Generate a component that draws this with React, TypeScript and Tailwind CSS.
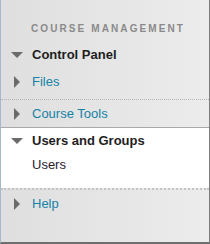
import { ReactNode } from 'react'

function Caret({ open }: { open?: boolean }) {
  return open ? (
    <svg width="12" height="6" viewBox="0 0 12 6" className="shrink-0">
      <polygon points="0,0 12,0 6,6" fill="#6b6b6b" />
    </svg>
  ) : (
    <svg width="6" height="12" viewBox="0 0 6 12" className="shrink-0">
      <polygon points="0,0 6,6 0,12" fill="#6b6b6b" />
    </svg>
  )
}

function Row({ open, bold, h, children }: { open?: boolean; bold?: boolean; h: string; children: ReactNode }) {
  return (
    <div className={`flex items-center ${h}`}>
      <div className="flex w-[31px] justify-center pl-[1px]">
        <Caret open={open} />
      </div>
      <span
        className={
          bold
            ? 'text-[13px] font-bold text-[#1e1e1e]'
            : 'text-[13px] text-[#1582a6]'
        }
      >
        {children}
      </span>
    </div>
  )
}

export default function App() {
  return (
    <div
      className="flex h-[244px] w-[210px] flex-col border-b-2 border-l border-r border-b-[#6e6e6e] border-l-[#a6b8c9] border-r-[#7e7e7e] bg-gradient-to-r from-[#dfdfdf] to-[#ececec]"
      style={{ fontFamily: '"Liberation Sans", Arial, sans-serif' }}
    >
      <div className="pl-[30px] pt-[23px] text-[10px] font-bold leading-[12px] tracking-[2.1px] text-[#8a8a8a]">
        COURSE MANAGEMENT
      </div>
      <div className="mt-[6px]">
        <Row open bold h="h-[28px]">Control Panel</Row>
        <div className="mb-[4px]">
          <Row h="h-[26px]">Files</Row>
        </div>
        <div className="border-t border-dotted border-[#b4b4b4]" />
        <Row h="h-[27px]">Course Tools</Row>
      </div>
      <div className="border-t border-[#a9a9a9] bg-white pb-[12px]">
        <Row open bold h="h-[26px]">Users and Groups</Row>
        <div className="flex h-[22px] items-center pl-[31px] text-[13px] text-[#2a2030]">Users</div>
      </div>
      <div className="border-t-2 border-dotted border-[#c4c4c4]">
        <Row h="h-[28px]">Help</Row>
      </div>
    </div>
  )
}
